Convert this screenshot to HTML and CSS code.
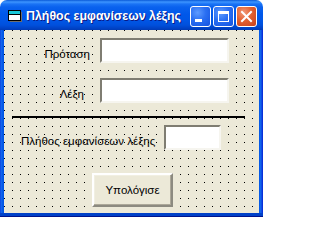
FILE: index.html
```html
<!DOCTYPE html>
<html lang="el">
<head>
<meta charset="utf-8">
<title>Πλήθος εμφανίσεων λέξης</title>
<link rel="stylesheet" href="styles.css">
</head>
<body>
<div class="window">
  <div class="titlebar">
    <svg class="appicon" width="14" height="12" viewBox="0 0 14 12">
      <rect x="2" y="2" width="12" height="10" fill="#6d6d6d"/>
      <rect x="0.5" y="0.5" width="12" height="10" fill="#fff" stroke="#000"/>
      <rect x="1" y="1" width="11" height="3" fill="#19c8d8"/>
      <line x1="1" y1="4.5" x2="12" y2="4.5" stroke="#000"/>
    </svg>
    <span class="title">Πλήθος εμφανίσεων λέξης</span>
    <div class="caption-buttons">
      <div class="cbtn">
        <svg width="21" height="21" viewBox="0 0 21 21"><rect x="5" y="13" width="7" height="3" fill="#fff"/></svg>
      </div>
      <div class="cbtn">
        <svg width="21" height="21" viewBox="0 0 21 21"><rect x="5.5" y="5.5" width="10" height="10" fill="none" stroke="#fff"/><rect x="5" y="5" width="11" height="3" fill="#fff"/></svg>
      </div>
      <div class="cbtn close">
        <svg width="21" height="21" viewBox="0 0 21 21"><path d="M6 6 L15 15 M15 6 L6 15" stroke="#fff" stroke-width="2" stroke-linecap="square"/></svg>
      </div>
    </div>
  </div>
  <div class="frame">
    <div class="client">
      <div class="row row-sentence">
        <span class="label label-sentence">Πρόταση</span>
        <div class="textbox textbox-wide"></div>
      </div>
      <div class="row row-word">
        <span class="label label-word">Λέξη</span>
        <div class="textbox textbox-wide"></div>
      </div>
      <div class="rule"></div>
      <div class="row row-count">
        <span class="label label-count">Πλήθος εμφανίσεων λέξης</span>
        <div class="textbox textbox-small"></div>
      </div>
      <div class="button-row">
        <button class="cmd">Υπολόγισε</button>
      </div>
    </div>
  </div>
</div>
</body>
</html>
```

FILE: styles.css
```css
html, body {
  margin: 0;
  padding: 0;
  background: #fff;
}

.window {
  width: 263px;
  height: 217px;
  display: flex;
  flex-direction: column;
  font-family: "Liberation Sans", Arial, sans-serif;
}

.titlebar {
  height: 30px;
  flex: none;
  display: flex;
  align-items: center;
  padding: 0 6px 0 8px;
  box-sizing: border-box;
  border-radius: 7px 7px 0 0;
  background: linear-gradient(to bottom,
    #0a5ad8 0px, #3d95ff 2px, #1a73f5 4px, #0a62ee 7px,
    #0058ea 14px, #0056e6 20px, #0050dc 25px, #0043c8 28px, #003bb5 30px);
}

.appicon {
  flex: none;
  margin-top: 2px;
}

.title {
  margin-left: 4px;
  color: #fff;
  font-weight: bold;
  font-size: 12.4px;
  white-space: nowrap;
  text-shadow: 1px 1px 0 #0a1883;
  flex: 1;
  margin-top: 1px;
}

.caption-buttons {
  display: flex;
  gap: 2px;
  margin-top: 3px;
}

.cbtn {
  width: 21px;
  height: 21px;
  box-sizing: border-box;
  border: 1px solid #fff;
  border-radius: 3px;
  background: radial-gradient(circle at 35% 30%, #5f9cff 0%, #2a6ff2 45%, #1452e0 100%);
  display: flex;
  overflow: hidden;
}

.cbtn svg {
  margin: -1px;
  flex: none;
}

.cbtn.close {
  background: radial-gradient(circle at 35% 30%, #f19a7a 0%, #e3602f 45%, #c8401c 100%);
}

.frame {
  flex: 1;
  display: flex;
  padding: 0 4px 4px 4px;
  background: linear-gradient(to right, #0831d9 0px, #166aee 1px, #0055e5 3px, #0055e5 259px, #166aee 261px, #0831d9 262px);
  box-shadow: inset 0 -1px 0 #00138c, inset 0 -4px 0 #0041c8;
}

.client {
  flex: 1;
  display: flex;
  flex-direction: column;
  background-color: #ece9d8;
  background-image:
    linear-gradient(to right, transparent 1px, #ece9d8 1px),
    linear-gradient(to bottom, #000 1px, #ece9d8 1px);
  background-size: 8px 8px;
  font-size: 11.5px;
  color: #000;
}

.row {
  display: flex;
  align-items: center;
  height: 25px;
}

.label {
  white-space: nowrap;
  margin-top: 7px;
  line-height: 14px;
}

.row-sentence {
  margin-top: 8px;
}

.label-sentence {
  width: 86px;
  text-align: right;
  margin-right: 10px;
}

.row-word {
  margin-top: 15px;
}

.label-word {
  width: 80px;
  text-align: right;
  margin-right: 16px;
}

.textbox {
  height: 25px;
  box-sizing: border-box;
  background: #fff;
  border-style: solid;
  border-width: 2px;
  border-color: #7f7d72 #f6f5ef #f6f5ef #7f7d72;
  box-shadow: inset 1px 1px 0 #ffffff;
}

.textbox-wide {
  width: 129px;
}

.textbox-small {
  width: 57px;
}

.rule {
  height: 2px;
  margin: 13px 14px 0 8px;
  background: #000;
}

.row-count {
  margin-top: 7px;
}

.label-count {
  margin-left: 17px;
  width: 143px;
}

.button-row {
  display: flex;
  margin-top: 23px;
  padding-left: 88px;
}

.cmd {
  width: 81px;
  height: 34px;
  box-sizing: border-box;
  padding: 0;
  margin: 0;
  font-family: "Liberation Sans", Arial, sans-serif;
  font-size: 11.5px;
  color: #000;
  background: #ece9d8;
  border-style: solid;
  border-width: 2px;
  border-color: #ffffff #8c8a80 #8c8a80 #ffffff;
  box-shadow: inset -1px -1px 0 #aca899, inset 1px 1px 0 #f1efe2;
}
```
